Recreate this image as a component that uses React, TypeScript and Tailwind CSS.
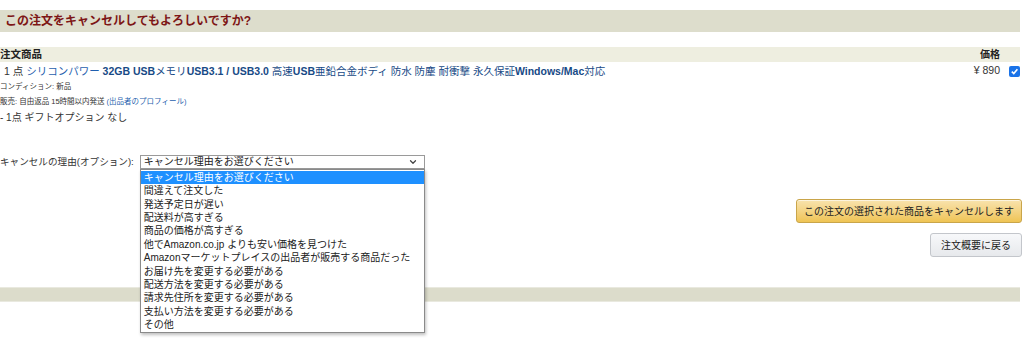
import { ChevronDown } from "lucide-react";

const reasons = [
  "キャンセル理由をお選びください",
  "間違えて注文した",
  "発送予定日が遅い",
  "配送料が高すぎる",
  "商品の価格が高すぎる",
  "他でAmazon.co.jp よりも安い価格を見つけた",
  "Amazonマーケットプレイスの出品者が販売する商品だった",
  "お届け先を変更する必要がある",
  "配送方法を変更する必要がある",
  "請求先住所を変更する必要がある",
  "支払い方法を変更する必要がある",
  "その他",
];

export default function App() {
  return (
    <div
      className="min-h-[338px] w-[1024px] bg-white pt-[10px] text-[#222]"
      style={{ fontFamily: '"Liberation Sans", "Noto Sans CJK JP", sans-serif' }}
    >
      {/* heading */}
      <div className="flex h-[22px] w-[1020px] items-center bg-[#ddddcc] pl-[5px]">
        <h1 className="text-[12px] font-bold text-[#7d1616]">この注文をキャンセルしてもよろしいですか?</h1>
      </div>

      {/* column header */}
      <div className="mt-[15px] flex h-[15px] w-[1020px] items-center justify-between bg-[#eeeee0] pr-[20px]">
        <span className="text-[10.5px] font-bold">注文商品</span>
        <span className="text-[10px] font-bold">価格</span>
      </div>

      {/* item */}
      <div className="flex h-[18px] w-[1020px] items-center justify-between">
        <div className="pl-[4px] text-[10.5px] leading-none">
          <span className="text-[#333]">1 点 </span>
          <span className="text-[#1f5fae]">シリコンパワー </span>
          <span className="text-[#174a86]">
            <b>32GB USB</b>メモリ<b>USB3.1 / USB3.0</b> 高速<b>USB</b>亜鉛合金ボディ 防水 防塵 耐衝撃 永久保証<b>Windows/Mac</b>対応
          </span>
        </div>
        <div className="flex items-center gap-[9px]">
          <span className="text-[10.5px] text-[#333]">¥ 890</span>
          <span className="flex h-[11px] w-[11px] items-center justify-center rounded-[2px] bg-[#1a73e8]">
            <svg width="9" height="9" viewBox="0 0 10 10">
              <path d="M2 5.2 L4.2 7.3 L8.2 2.6" fill="none" stroke="white" strokeWidth="1.8" />
            </svg>
          </span>
        </div>
      </div>
      <div className="flex h-[13px] items-center text-[7.5px] text-[#333]">コンディション: 新品</div>
      <div className="flex h-[18px] items-center text-[7.5px] text-[#333]">
        販売: 自由返品 15時間以内発送 <span className="ml-[2px] text-[#1f5fae]">(出品者のプロフィール)</span>
      </div>
      <div className="flex h-[12px] items-center text-[10px] text-[#333]">- 1点 ギフトオプション なし</div>

      {/* cancel form */}
      <div className="flex w-[1022px] items-start justify-between">
        <div className="flex items-center gap-[6px] pt-[32px]">
          <span className="text-[9.6px] text-[#333]">キャンセルの理由(オプション):</span>
          <div className="relative z-10">
            <div className="flex h-[14px] w-[285px] items-center justify-between border border-[#9a9a9a] bg-white pl-[3px] pr-[6px] text-[10px] leading-none">
              <span>キャンセル理由をお選びください</span>
              <ChevronDown size={10} strokeWidth={3} className="text-[#444]" />
            </div>
            <ul className="absolute left-0 top-full w-[285px] border border-[#8a8a8a] bg-white py-[0.5px] shadow-[1px_2px_3px_rgba(0,0,0,0.25)]">
              {reasons.map((r, i) => (
                <li
                  key={r}
                  className={
                    i === 0
                      ? "bg-[#1e90ff] px-[3px] text-[10px] leading-[13.4px] text-white"
                      : "px-[3px] text-[10px] leading-[13.4px] text-[#222]"
                  }
                >
                  {r}
                </li>
              ))}
            </ul>
          </div>
        </div>
        <div className="flex flex-col items-end gap-[10px] pt-[76px]">
          <button className="h-[24px] w-[226px] rounded-[3px] border border-[#c9a54a] bg-gradient-to-b from-[#f8e3ad] to-[#efc453] text-[10px] text-[#222] shadow-[0_1px_0_rgba(255,255,255,0.6)_inset]">
            この注文の選択された商品をキャンセルします
          </button>
          <button className="h-[24px] w-[92px] rounded-[3px] border border-[#c3c6cb] bg-gradient-to-b from-[#f7f8fa] to-[#e7e9ec] text-[10px] text-[#222]">
            注文概要に戻る
          </button>
        </div>
      </div>

      {/* bottom bar */}
      <div className="mt-[30px] h-[15px] w-[1020px] border-y border-[#e9e9df] bg-[#dcdccb]" />
    </div>
  );
}
